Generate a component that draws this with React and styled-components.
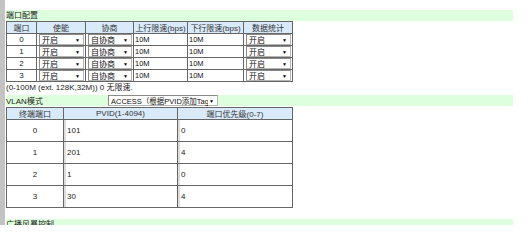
import React from 'react';
import styled, { createGlobalStyle } from 'styled-components';

const GlobalStyle = createGlobalStyle`
  html, body {
    margin: 0;
    padding: 0;
    background: #fff;
    font-family: "Liberation Sans", "Noto Sans CJK SC", sans-serif;
    font-size: 8px;
    color: #222;
  }
`;

const Page = styled.div`
  display: flex;
  width: 528px;
  height: 225px;
  overflow: hidden;
`;

const Sidebar = styled.div`
  width: 5px;
  flex: none;
  background: #c3c3c3;
`;

const Content = styled.div`
  width: 507px;
  padding: 10px 0 0 1px;
  display: flex;
  flex-direction: column;
`;

const Title = styled.div`
  background: #ddffdd;
  height: 11px;
  line-height: 11px;
  font-size: 8px;
  color: #222;
  margin-top: ${p => p.top || 0}px;
`;

const Table = styled.table`
  border-collapse: collapse;
  width: 286px;
  table-layout: fixed;
  border: 1px solid #666;
`;

const Th = styled.th`
  background: #d9eafb;
  border: 1px solid #666;
  font-weight: normal;
  font-size: 8px;
  height: ${p => p.h}px;
  padding: 0;
  text-align: center;
  color: #333;
  white-space: nowrap;
  overflow: hidden;
`;

const Td = styled.td`
  border: 1px solid #666;
  height: ${p => p.h}px;
  padding: 0 0 0 ${p => p.pad ?? 3}px;
  text-align: ${p => (p.center ? 'center' : 'left')};
  font-size: 8px;
  color: #222;
  box-shadow: ${p => (p.double ? 'inset 2px 0 0 #ddd' : 'none')};
`;

const Select = styled.div`
  display: flex;
  align-items: center;
  box-sizing: border-box;
  width: ${p => p.w}px;
  height: 11px;
  border: 1px solid #b5b5b5;
  border-top-color: #8a8a8a;
  border-left-color: #8a8a8a;
  background: #fff;
  padding: 0 3px 0 2px;
  font-size: ${p => p.fs || 8}px;
  color: #111;
  white-space: nowrap;
`;

const SelectText = styled.span`
  flex: 1;
  min-width: 0;
  overflow: hidden;
  text-overflow: clip;
`;

const Arrow = styled.span`
  flex: none;
  font-size: 5px;
  color: #000;
  margin-left: 1px;
`;

const Value = styled.span`
  font-size: 7.5px;
  color: #111;
`;

const Note = styled.div`
  height: 11px;
  line-height: 11px;
  font-size: 8px;
  color: #222;
`;

const ModeRow = styled.div`
  display: flex;
  align-items: center;
  background: #ddffdd;
  height: 11px;
  margin-top: 2px;
  margin-bottom: 1px;
`;

const ModeLabel = styled.span`
  width: 102px;
  font-size: 8px;
`;

const ports = [0, 1, 2, 3];
const vlan = [
  { port: 0, pvid: 101, pri: 0 },
  { port: 1, pvid: 201, pri: 4 },
  { port: 2, pvid: 1, pri: 0 },
  { port: 3, pvid: 30, pri: 4 },
];

const Drop = ({ w, fs, children }) => (
  <Select w={w} fs={fs}>
    <SelectText>{children}</SelectText>
    <Arrow>▼</Arrow>
  </Select>
);

export default function App() {
  return (
    <>
      <GlobalStyle />
      <Page>
        <Sidebar />
        <Content>
          <Title>端口配置</Title>
          <Table>
            <colgroup>
              <col style={{ width: 30 }} />
              <col style={{ width: 49 }} />
              <col style={{ width: 48 }} />
              <col style={{ width: 54 }} />
              <col style={{ width: 56 }} />
              <col style={{ width: 49 }} />
            </colgroup>
            <thead>
              <tr>
                <Th h={11}>端口</Th>
                <Th h={11}>使能</Th>
                <Th h={11}>协商</Th>
                <Th h={11}>上行限速(bps)</Th>
                <Th h={11}>下行限速(bps)</Th>
                <Th h={11}>数据统计</Th>
              </tr>
            </thead>
            <tbody>
              {ports.map(p => (
                <tr key={p}>
                  <Td h={11} center pad={0}>{p}</Td>
                  <Td h={11} pad={2}><Drop w={45}>开启</Drop></Td>
                  <Td h={11} pad={2}><Drop w={44}>自协商</Drop></Td>
                  <Td h={11} pad={1}><Value>10M</Value></Td>
                  <Td h={11} pad={1}><Value>10M</Value></Td>
                  <Td h={11} pad={2}><Drop w={45}>开启</Drop></Td>
                </tr>
              ))}
            </tbody>
          </Table>
          <Note>(0-100M (ext. 128K,32M)) 0 无限速.</Note>
          <ModeRow>
            <ModeLabel>VLAN模式</ModeLabel>
            <Drop w={110} fs={7.5}>ACCESS（根据PVID添加Tag）</Drop>
          </ModeRow>
          <Table>
            <colgroup>
              <col style={{ width: 57 }} />
              <col style={{ width: 114 }} />
              <col style={{ width: 115 }} />
            </colgroup>
            <thead>
              <tr>
                <Th h={11}>终端端口</Th>
                <Th h={11}>PVID(1-4094)</Th>
                <Th h={11}>端口优先级(0-7)</Th>
              </tr>
            </thead>
            <tbody>
              {vlan.map(v => (
                <tr key={v.port}>
                  <Td h={21} center pad={0}>{v.port}</Td>
                  <Td h={21} double>{v.pvid}</Td>
                  <Td h={21} double>{v.pri}</Td>
                </tr>
              ))}
            </tbody>
          </Table>
          <Title top={11}>广播风暴控制</Title>
        </Content>
      </Page>
    </>
  );
}
